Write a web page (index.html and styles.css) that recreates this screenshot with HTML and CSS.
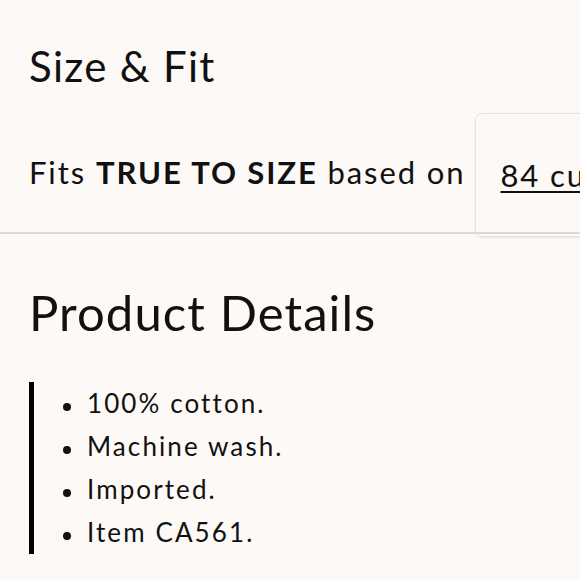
FILE: index.html
```html
<!DOCTYPE html>
<html lang="en">
<head>
<meta charset="utf-8">
<title>Size &amp; Fit</title>
<link rel="stylesheet" href="styles.css">
</head>
<body>
<main class="page">
  <section class="size-fit">
    <h2 class="heading heading-sm">Size &amp; Fit</h2>
    <div class="fit-row">
      <p class="fit-text">Fits <strong>TRUE TO SIZE</strong> based on</p>
      <div class="review-card"><a class="review-link" href="#">84 customer reviews</a></div>
    </div>
  </section>
  <section class="details">
    <h2 class="heading heading-lg">Product Details</h2>
    <ul class="detail-list">
      <li>100% cotton.</li>
      <li>Machine wash.</li>
      <li>Imported.</li>
      <li>Item CA561.</li>
    </ul>
  </section>
</main>
</body>
</html>
```
FILE: styles.css
```css
html, body {
  margin: 0;
  padding: 0;
  background: #fcf9f6;
  color: #111;
  font-family: "Lato", "Noto Sans", sans-serif;
  overflow: hidden;
}
.page {
  width: 580px;
  height: 580px;
  overflow: hidden;
}
.heading {
  margin: 0;
  font-weight: 400;
  padding-left: 29px;
}
.heading-sm {
  font-size: 42px;
  letter-spacing: 1.3px;
  line-height: 48px;
  padding-top: 42px;
  height: 70px;
}
.fit-row {
  display: flex;
  align-items: center;
  height: 120px;
  border-bottom: 2px solid #dcdad8;
  padding-left: 29px;
  gap: 10px;
}
.fit-text {
  margin: 0;
  font-size: 31px;
  letter-spacing: 1.9px;
  white-space: nowrap;
  flex-shrink: 0;
}
.fit-text strong {
  font-weight: 700;
}
.review-card {
  align-self: flex-start;
  flex-shrink: 0;
  margin-top: 1px;
  margin-bottom: -5px;
  height: 124px;
  width: 320px;
  box-sizing: border-box;
  border: 1px solid #e4e2df;
  border-radius: 7px;
  box-shadow: 0 1px 2px rgba(0,0,0,0.08);
  display: flex;
  align-items: center;
  padding-left: 24px;
}
.review-link {
  color: #111;
  font-size: 31px;
  letter-spacing: 1.9px;
  white-space: nowrap;
  text-decoration: underline;
  text-decoration-thickness: 2px;
  text-underline-offset: 4px;
}
.heading-lg {
  font-size: 49px;
  letter-spacing: 1.1px;
  line-height: 60px;
  padding-top: 48px;
}
.detail-list {
  list-style: none;
  margin: 40px 0 0 29px;
  padding: 0 0 0 53px;
  border-left: 5px solid #000;
}
.detail-list li {
  position: relative;
  font-size: 26px;
  letter-spacing: 2.1px;
  line-height: 43px;
}
.detail-list li::before {
  content: "";
  position: absolute;
  left: -24px;
  top: 21px;
  width: 8px;
  height: 8px;
  border-radius: 50%;
  background: #111;
}
```
